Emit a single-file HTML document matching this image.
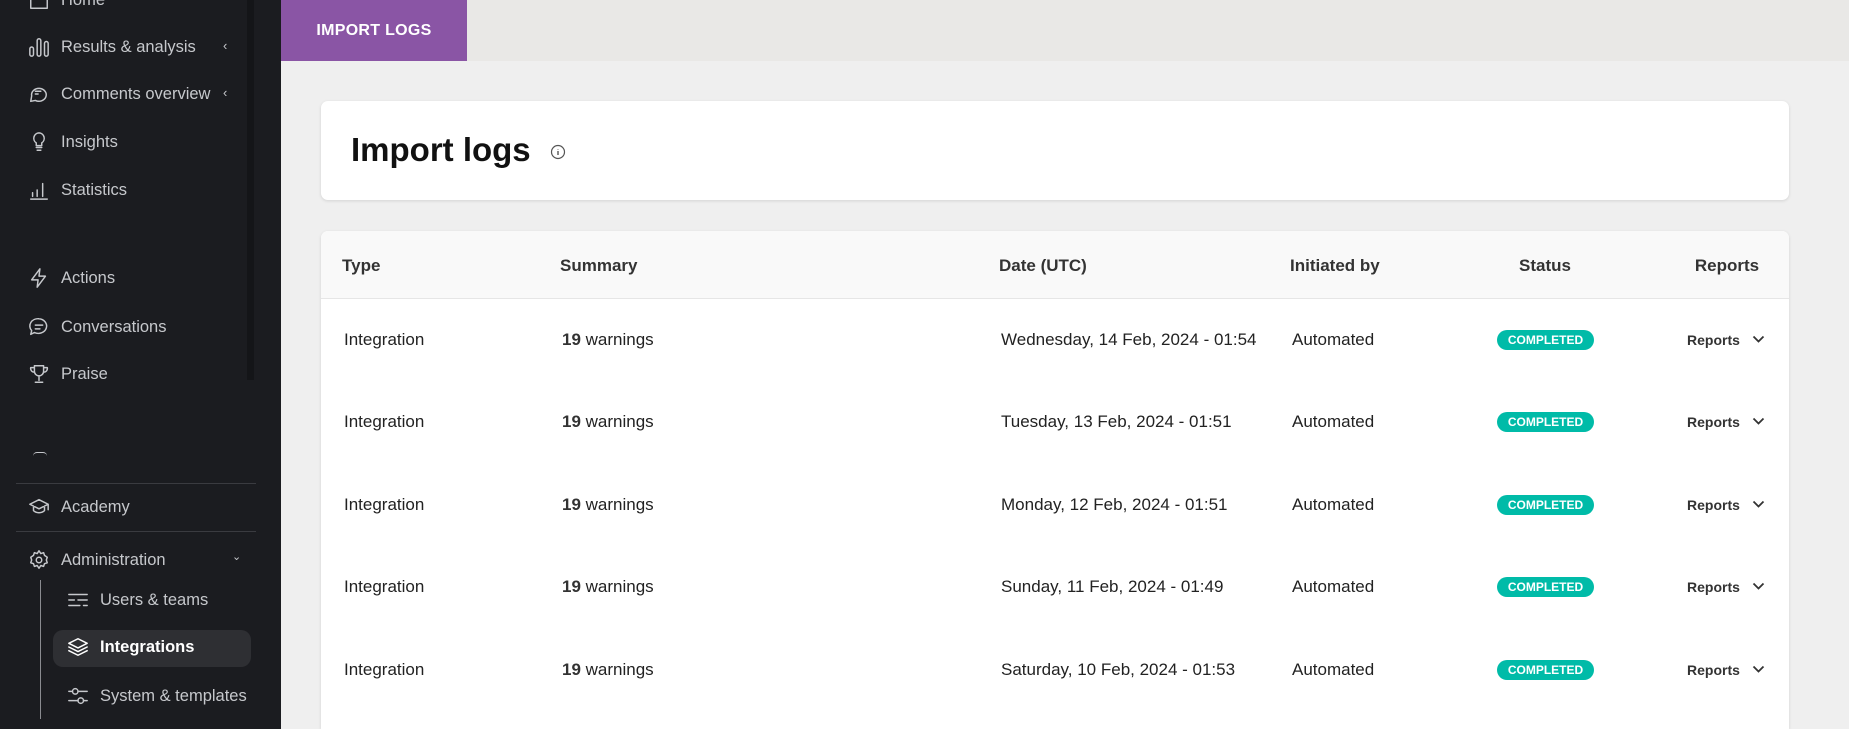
<!DOCTYPE html>
<html style="overflow:hidden;width:1849px;height:729px"><head><meta charset="utf-8"><style>
*{box-sizing:border-box;margin:0;padding:0}
body{width:1849px;height:729px;overflow:hidden;background:#efefef;font-family:"Liberation Sans",sans-serif;position:relative}
#sb{position:absolute;left:0;top:0;width:281px;height:729px;background:#1b1c20}
#scr{position:absolute;left:247px;top:0;width:7px;height:380px;background:#141518}
.it{position:absolute;left:28px;height:30px;display:flex;align-items:center;color:#c6c8cc;font-size:16.5px;white-space:nowrap}
.it svg{width:22px;height:22px;margin-right:11px;fill:none;stroke:#c6c8cc;stroke-width:1.6;stroke-linecap:round;stroke-linejoin:round}
.car{position:absolute;left:223px;color:#c6c8cc;font-size:13px}
.div{position:absolute;left:16px;width:240px;height:1px;background:#3a3b40}
#top{position:absolute;left:281px;top:0;width:1568px;height:61px;background:#e9e8e6}
#tab{position:absolute;left:281px;top:0;width:186px;height:61px;background:#8a55a5;color:#fff;font-weight:bold;font-size:16px;display:flex;align-items:center;justify-content:center;letter-spacing:.3px}
.card{position:absolute;left:321px;width:1468px;background:#fff;border-radius:7px;box-shadow:0 1px 3px rgba(0,0,0,.12)}
h1{position:absolute;left:30px;top:30px;font-size:33px;font-weight:bold;color:#111}
.hd{position:absolute;top:0;left:0;width:100%;height:68px;background:#f9f9f9;border-bottom:1px solid #e6e6e6;border-radius:7px 7px 0 0}
.th{position:absolute;top:25px;font-size:17px;color:#333;font-weight:bold}
.td{position:absolute;font-size:17px;color:#222}
.bd{position:absolute;width:97px;height:20px;border-radius:10px;background:#00bba8;color:#fff;font-size:12px;font-weight:bold;display:flex;align-items:center;justify-content:center}
</style></head><body>
<div id="sb">
<div id="scr"></div>
<div class="it" style="top:-15px"><svg viewBox="0 0 24 24"><path d="M3 10l9-7 9 7v11H3z"/></svg>Home</div>
<div class="it" style="top:32px"><svg viewBox="0 0 24 24"><rect x="2" y="12" width="4" height="10" rx="2"/><rect x="10" y="3" width="4" height="19" rx="2"/><rect x="18" y="6" width="4" height="16" rx="2"/></svg>Results &amp; analysis</div><div class="car" style="top:38px">‹</div>
<div class="it" style="top:79px"><svg viewBox="0 0 24 24"><path d="M4 14a8 7 0 1 1 4 5l-5 1z"/><path d="M8 9h6M8 12h3"/></svg>Comments overview</div><div class="car" style="top:85px">‹</div>
<div class="it" style="top:127px"><svg viewBox="0 0 24 24"><path d="M9 18h6M10 21h4M12 2a6 6 0 0 0-3 11v3h6v-3a6 6 0 0 0-3-11z"/></svg>Insights</div>
<div class="it" style="top:175px"><svg viewBox="0 0 24 24"><path d="M3 22h18M5 19v-4M10 19v-7M16 19V5"/></svg>Statistics</div>
<div class="it" style="top:263px"><svg viewBox="0 0 24 24"><path d="M13 2L4 14h7l-1 8 9-12h-7z"/></svg>Actions</div>
<div class="it" style="top:312px"><svg viewBox="0 0 24 24"><path d="M12 3a9 8 0 1 1-5 15l-4 2 1-4a9 8 0 0 1 8-13zM8 10h8M8 14h5"/></svg>Conversations</div>
<div class="it" style="top:359px"><svg viewBox="0 0 24 24"><path d="M7 3h10v6a5 5 0 0 1-10 0zM7 5H3a4 4 0 0 0 4 5M17 5h4a4 4 0 0 1-4 5M12 14v5M8 21h8"/></svg>Praise</div>
<div style="position:absolute;left:33px;top:452px;width:14px;height:4px;border-top:1.5px solid #c6c8cc;border-radius:7px 7px 0 0"></div>
<div class="div" style="top:483px"></div>
<div class="it" style="top:492px"><svg viewBox="0 0 24 24"><path d="M2 9l10-5 10 5-10 5zM6 11v5c3 3 9 3 12 0v-5M22 9v6"/></svg>Academy</div>
<div class="div" style="top:531px"></div>
<div class="it" style="top:545px"><svg viewBox="0 0 24 24"><circle cx="12" cy="12" r="3"/><path d="M12 2l2 3 3-1 1 3 3 2-1 3 1 3-3 1-1 3-3-1-2 3-2-3-3 1-1-3-3-1 1-3-1-3 3-2 1-3 3 1z"/></svg>Administration</div><div class="car" style="top:550px;left:232px;font-size:11px">⌄</div>
<div style="position:absolute;left:40px;top:580px;width:1px;height:139px;background:#8a8b90"></div>
<div class="it" style="top:585px;left:67px"><svg viewBox="0 0 24 24"><path d="M2 6h20M2 12h6M12 12h10M2 18h12M18 18h4"/></svg>Users &amp; teams</div>
<div style="position:absolute;left:53px;top:630px;width:198px;height:37px;border-radius:10px;background:#2e2f33"></div>
<div class="it" style="top:632px;left:67px;color:#fff;font-weight:bold"><svg viewBox="0 0 24 24" style="stroke:#fff"><path d="M12 3l10 5-10 5L2 8zM2 12l10 5 10-5M2 16l10 5 10-5"/></svg>Integrations</div>
<div class="it" style="top:681px;left:67px"><svg viewBox="0 0 24 24"><path d="M2 7h4M12 7h10M2 17h10M18 17h4"/><circle cx="9" cy="7" r="3"/><circle cx="15" cy="17" r="3"/></svg>System &amp; templates</div>
</div>
<div id="top"></div><div id="tab">IMPORT LOGS</div>
<div class="card" style="top:101px;height:99px"><h1>Import logs</h1>
<svg style="position:absolute;left:229px;top:43px" width="16" height="16" viewBox="0 0 16 16"><circle cx="8" cy="8" r="6.5" fill="none" stroke="#555" stroke-width="1.2"/><path d="M8 7v4M8 5v.5" stroke="#555" stroke-width="1.4"/></svg></div>
<div class="card" style="top:231px;height:498px;border-radius:7px 7px 0 0">
<div class="hd"></div>
<div class="th" style="left:21px">Type</div><div class="th" style="left:239px">Summary</div><div class="th" style="left:678px">Date (UTC)</div><div class="th" style="left:969px">Initiated by</div><div class="th" style="left:1224px;width:0;display:flex;justify-content:center">Status</div><div class="th" style="left:1406px;width:0;display:flex;justify-content:center">Reports</div>
</div>
<div id="rows"></div>
<script>
var d=["Wednesday, 14 Feb, 2024 - 01:54","Tuesday, 13 Feb, 2024 - 01:51","Monday, 12 Feb, 2024 - 01:51","Sunday, 11 Feb, 2024 - 01:49","Saturday, 10 Feb, 2024 - 01:53"],y=[340,422,505,587,670],h="";
for(var i=0;i<5;i++){var t=y[i]-10;
h+='<div class="td" style="left:344px;top:'+t+'px">Integration</div><div class="td" style="left:562px;top:'+t+'px"><span style="font-weight:bold;color:#333">19</span> warnings</div><div class="td" style="left:1001px;top:'+t+'px">'+d[i]+'</div><div class="td" style="left:1292px;top:'+t+'px">Automated</div><div class="bd" style="left:1497px;top:'+(y[i]-10)+'px">COMPLETED</div><div class="td" style="left:1687px;top:'+(y[i]-8)+'px;font-size:14px;font-weight:bold;color:#333">Reports</div><svg style="position:absolute;left:1752px;top:'+(y[i]-5)+'px" width="13" height="9" viewBox="0 0 13 9"><path d="M1.5 1.5l5 5 5-5" fill="none" stroke="#333" stroke-width="1.8"/></svg>';}
document.getElementById("rows").innerHTML=h;
</script>
</body></html>
